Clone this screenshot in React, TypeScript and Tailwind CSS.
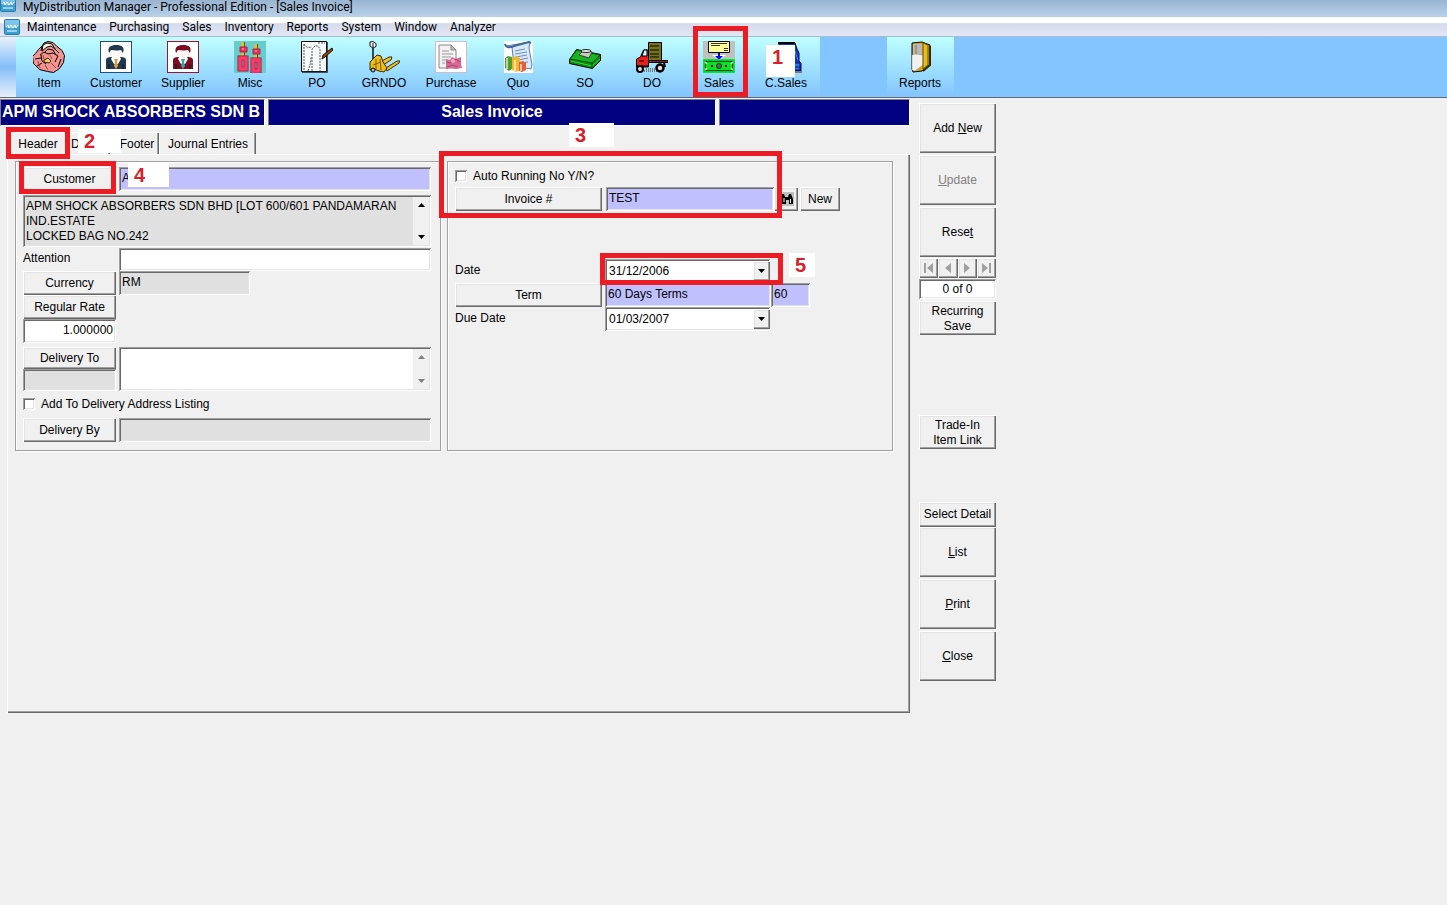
import type { ReactNode } from 'react';
import clsx from 'clsx';

const RAISED =
  'bg-[#f0f0f0] shadow-[inset_1px_1px_0_#ffffff,inset_-1px_-1px_0_#696969,inset_-2px_-2px_0_#a0a0a0,inset_2px_2px_0_#e3e3e3]';
const SUNKEN =
  'shadow-[inset_1px_1px_0_#a0a0a0,inset_-1px_-1px_0_#ffffff,inset_2px_2px_0_#696969,inset_-2px_-2px_0_#e3e3e3]';

const menuItems = ['Maintenance', 'Purchasing', 'Sales', 'Inventory', 'Reports', 'System', 'Window', 'Analyzer'];

function ItemIcon() {
  return (
    <svg viewBox="0 0 32 32" className="h-8 w-8">
      <path d="M9 5l2-3 4-1.500 5 1 4 4 5 4 2.500 5-1 7-4 6-6 4-6-1-8-2-6-6-1-7 3-3 3-4z" fill="#f29490" stroke="#000" />
      <path d="M10 4l4-2 5 1 3 5-4-3-4 1-5 4z" fill="#fffbe0" stroke="#000" />
      <path d="M9 5l-1 5M12 11l3-3 5 1 3 5M22 8l4 4M7 14l4-3 4 2 5-1 5 3" fill="none" stroke="#000" />
      <path d="M2 18l6-1M8 14l1 6 4 3M4 25l5-3M25 15l-3 6M28 18l-3 8" fill="none" stroke="#000" />
      <path d="M11 19l4-2 3 3-2 2-5-1z" fill="#f5d04a" stroke="#000" strokeWidth=".8" />
      <path d="M12 24l3 5M18 22l5 5M10 14l1 4M17 14l2 4M5 20l2 7" fill="none" stroke="#b04040" />
    </svg>
  );
}

function PersonIcon({ frame, suit, tie }: { frame: string; suit: string; tie: string }) {
  return (
    <svg viewBox="0 0 32 32" className="h-8 w-8">
      <rect x=".5" y=".5" width="31" height="31" fill="#fff" stroke={frame} />
      <path d="M10 9h12v4c0 3-3 5-6 5s-6-2-6-5z" fill="#fdf8f5" stroke="#e0d8d4" strokeWidth=".5" />
      <path d="M9 12C7 6 11 4 16 4c6 0 9 2 7 8l-2-3c-4 1-7 0-10 0z" fill={suit} />
      <path d="M6 28v-9c0-2 2-3 5-3h10c3 0 5 1 5 3v9z" fill={suit} />
      <path d="M12 16h8l1 2-3 5h-4l-3-5z" fill="#fff" />
      <path d="M14 18h4l-1 3 1 4-2 3-2-3 1-4z" fill={tie} />
      <path d="M9 23v5M23 23v5" stroke="#0b1420" />
    </svg>
  );
}

function MiscIcon() {
  return (
    <svg viewBox="0 0 32 32" className="h-8 w-8">
      <rect width="32" height="32" fill="#66cccc" />
      {[0, 13].map((x) => (
        <g key={x} transform={`translate(${x} ${x ? 2 : 0})`}>
          <path d="M9 1v5M9 10v5" stroke="#e8c020" strokeWidth="3" />
          <path d="M10.500 1v5M10.500 11v4" stroke="#7a4c10" />
          <path d="M6 6h7v5H6z" fill="#f03060" stroke="#a82048" />
          <path d="M6 17h6v11H6z" fill="none" stroke="#8c1838" strokeWidth="5" />
          <path d="M6 17h6v11H6z" fill="none" stroke="#ff3868" strokeWidth="3.500" />
          <path d="M8 8h2" stroke="#ffb0c0" />
        </g>
      ))}
    </svg>
  );
}

function PoIcon() {
  return (
    <svg viewBox="0 0 32 32" className="h-8 w-8">
      <path d="M.5.500h25v30H.500z" fill="#f6fafa" stroke="#000" />
      <path d="M26 1v30H1" fill="none" stroke="#222" strokeWidth="1.500" />
      <path
        d="M3 3c1 3 4 4 8 3M11 30V8l3-3h3l2 3v22M7 30c2-6 3-9 3-14M3 3v27M17 2h7"
        fill="none"
        stroke="#555"
        strokeDasharray="2 1"
      />
      <path d="M21 18l1-4 9-7 1 2-8 7z" fill="#8b4513" stroke="#2c1205" />
    </svg>
  );
}

function GrnIcon() {
  return (
    <svg viewBox="0 0 32 32" className="h-8 w-8">
      <path d="M5 5v20" stroke="#111" strokeWidth="1.500" />
      <path d="M2 1l3-.5 3 2v3L5 7 2 5zM5 2v4" fill="#fff" stroke="#111" />
      <path d="M14 20l7-4h3l-1 3-8 5zM18 27l11-7h3l-1 2-12 8z" fill="#f0c020" stroke="#3a2a00" />
      <path d="M2 21l4-4 3-3 4 1 2 6 4 6-3 4-5-1-5-2-4 1z" fill="#eebc1c" stroke="#3a2a00" />
      <path d="M8 18v10M12 18l1 11M5 24l8-3" fill="none" stroke="#7c5c00" />
      <circle cx="5" cy="29" r="2" fill="#bbb" stroke="#000" />
    </svg>
  );
}

function PurchaseIcon() {
  return (
    <svg viewBox="0 0 32 32" className="h-8 w-8">
      <rect x=".5" y=".5" width="31" height="31" fill="#fff" stroke="#d8b8cc" />
      <path d="M4 4h12l5 5v18H4z" fill="#f2f2f2" stroke="#888" />
      <path d="M16 4v5h5z" fill="#bbb" stroke="#888" />
      <path d="M7 10h7M7 13h11M7 16h9M7 19h4M7 22h3" stroke="#999" />
      <path d="M11 18l4 1 2-3 4 2 5-2v6l1 5-6 1-5-1-5 1z" fill="#d76a96" />
      <path d="M11 21l5 1 5-4 4 3M12 26l5-2 6 2" fill="none" stroke="#a8406c" />
      <circle cx="18" cy="20" r="2" fill="#f2a9c4" />
    </svg>
  );
}

function QuoIcon() {
  return (
    <svg viewBox="0 0 32 32" className="h-8 w-8">
      <path d="M2 0h29v32H2z" fill="#fff" />
      <path d="M5 5l5 1 2 19 17 3 1-4-3-17 1-6-18 3z" fill="#d8e8fa" stroke="#5b7fae" />
      <path d="M3 3c1 4 5 4 9 2l15-4 2 1" fill="none" stroke="#41689d" strokeWidth="2" />
      <path d="M13 10l10-2M13 13l12-2M14 16l11-2M16 19l10-2M18 22l8-1" stroke="#6d8db8" />
      <path d="M3 17l3-2 4 1v12l-3 2-4-3z" fill="#4f9d2f" />
      <path d="M10 17l4-2 4 2v12l-4 2-4-2z" fill="#f0b62c" />
      <path d="M17 21l4-1 3 2v7l-4 2-3-1z" fill="#e4602e" />
      <path d="M5 17v11M13 19v11M19 23v7" stroke="#fff" opacity=".6" strokeWidth="2" />
    </svg>
  );
}

function SoIcon() {
  return (
    <svg viewBox="0 0 32 32" className="h-8 w-8">
      <path d="M.500 18.500l7-10 24 5v6l-8 8-23-5z" fill="#0a8c14" stroke="#000" />
      <path d="M1 18l7-9 23 5-8 8z" fill="#18b424" stroke="#04500a" />
      <path d="M2 20l21 5 8-7" fill="none" stroke="#25e030" />
      <path d="M10 14l5-5 8 2-3 6z" fill="#c4cdc0" stroke="#30402c" />
      <ellipse cx="17" cy="10" rx="5" ry="1.500" fill="#eee" stroke="#222" />
      <path d="M23 22v5" stroke="#04500a" />
    </svg>
  );
}

function DoIcon() {
  return (
    <svg viewBox="0 0 32 32" className="h-8 w-8">
      <path d="M8 30h14M10 28h12" stroke="#777" strokeWidth="2" strokeDasharray="1 1" />
      <path d="M12.500 1.500h13v18h-13z" fill="#77711c" stroke="#000" />
      <path d="M14 5h9M14 9h9M14 13h9M14 16h9" stroke="#2c2a05" strokeWidth="1.500" />
      <path d="M12 19.500h20v2H12z" fill="#a01818" stroke="#000" />
      <path d="M.500 26v-8l4-2 3-7h5v17z" fill="#ee1c1c" stroke="#000" />
      <path d="M6 15l2-6h3v6z" fill="#bff" stroke="#000" />
      <path d="M0 25h13M3 20h5" stroke="#000" />
      <circle cx="4" cy="28" r="3" fill="#ddd" stroke="#000" strokeWidth="2" />
      <circle cx="24" cy="27" r="3.500" fill="#ddd" stroke="#000" strokeWidth="2.500" />
      <path d="M28 22l1 4" stroke="#000" strokeWidth="2" />
    </svg>
  );
}

function SalesIcon() {
  return (
    <svg viewBox="0 0 32 32" className="h-8 w-8">
      <rect width="32" height="32" fill="#c0c0c0" />
      <path d="M5.500.500h21v11h-21z" fill="#ffff99" stroke="#000" />
      <path d="M8 2.500h16M8 4.500h9M21 7.500h4M21 9.500h4" stroke="#333" />
      <path d="M9 14h14l-7 5z" fill="#fff" />
      <path d="M15 12h2v3h3l-4 4-4-4h3z" fill="#00f" />
      <path d="M.5 18.500h31v13H.500z" fill="#00d818" stroke="#00e838" />
      <path d="M2.500 20.500h27v9h-27z" fill="#10e020" stroke="#004c08" />
      <path d="M2 21l2 2M30 21l-2 2M2 29l2-2M30 29l-2-2" stroke="#fff" strokeWidth="1.500" />
      <circle cx="16" cy="25" r="2.500" fill="#567056" stroke="#033" />
      <path d="M8 25h2M22 25h2" stroke="#000" strokeWidth="2" />
    </svg>
  );
}

function CashSalesIcon() {
  return (
    <svg viewBox="0 0 32 32" className="h-8 w-8">
      <path d="M9 2h16l2 6 2 4v8l2 2v8H6l3-10z" fill="#1238b8" stroke="#000060" />
      <path d="M8 2h17" stroke="#000" strokeWidth="2" />
      <path d="M25 10l3 9" stroke="#4f80ff" />
      <path d="M23 22h7v7h-7z" fill="#2878e8" stroke="#001080" />
      <path d="M24 26h6" stroke="#001080" />
      <path d="M6 31h26" stroke="#777" strokeWidth="2" />
    </svg>
  );
}

function ReportsIcon() {
  return (
    <svg viewBox="0 0 32 32" className="h-8 w-8">
      <path d="M8 2l10-1 8 3v20l-8 6-9 1-1-3z" fill="#d4a817" stroke="#000" />
      <path d="M9 3h9v11l-9-1z" fill="#b8b8b8" />
      <path d="M8 14l3-1 8 1v10l-8 6-3-1z" fill="#f2f2f2" stroke="#888" strokeWidth=".5" />
      <path d="M19 2l5 2v20l-5 4z" fill="#e4bc20" stroke="#6e5200" />
      <path d="M26 5v19l-7 6" fill="none" stroke="#3a2a00" strokeWidth="2" />
      <path d="M12 4v9" stroke="#8a7a3a" />
    </svg>
  );
}

function AppIcon({ className }: { className: string }) {
  return (
    <svg viewBox="0 0 16 16" preserveAspectRatio="xMidYMax slice" className={clsx('w-4 shrink-0', className)}>
      <rect x=".5" y=".5" width="15" height="15" rx="1" fill="#3aa0d4" stroke="#2a7cac" />
      <path d="M1 1h14v6c-5 3-9 3-14 1z" fill="#7cc4ea" />
      <path d="M2 8l2-2 1 3 2-3 2 3 2-3 1 3 2-3M3 12h10" fill="none" stroke="#fff" />
    </svg>
  );
}

const tools: { label: string; icon: ReactNode }[] = [
  { label: 'Item', icon: <ItemIcon /> },
  { label: 'Customer', icon: <PersonIcon frame="#1f4f80" suit="#21384f" tie="#e0a040" /> },
  { label: 'Supplier', icon: <PersonIcon frame="#a01030" suit="#7c0c22" tie="#20b0a8" /> },
  { label: 'Misc', icon: <MiscIcon /> },
  { label: 'PO', icon: <PoIcon /> },
  { label: 'GRNDO', icon: <GrnIcon /> },
  { label: 'Purchase', icon: <PurchaseIcon /> },
  { label: 'Quo', icon: <QuoIcon /> },
  { label: 'SO', icon: <SoIcon /> },
  { label: 'DO', icon: <DoIcon /> },
  { label: 'Sales', icon: <SalesIcon /> },
  { label: 'C.Sales', icon: <CashSalesIcon /> },
];

function ToolButton({ label, icon, children }: { label: string; icon: ReactNode; children?: ReactNode }) {
  return (
    <div className="relative w-[67px] shrink-0">
      <button className="flex h-[60px] w-full flex-col items-center bg-linear-to-b from-[#bfffff] to-[#83c3ff] pt-1 pr-px">
        {icon}
        <span className="mt-0.5 text-[12px] leading-4">{label}</span>
      </button>
      {children}
    </div>
  );
}

// Red outline around a step of the guide
function Outline({ className }: { className: string }) {
  return <div className={clsx('pointer-events-none absolute z-10 border-[5px] border-[#ed1c24]', className)} />;
}

// White tag with the step number
function Step({ n, className }: { n: number; className: string }) {
  return (
    <div className={clsx('pointer-events-none absolute z-20 bg-white pl-1.5 text-[20px] leading-6 font-bold text-[#d9202a]', className)}>
      {n}
    </div>
  );
}

function Btn({ children, className, disabled }: { children: ReactNode; className?: string; disabled?: boolean }) {
  return (
    <button disabled={disabled} className={clsx(RAISED, 'shrink-0 text-center disabled:text-[#808080]', className)}>
      {children}
    </button>
  );
}

function Field({ label, value, className }: { label: string; value?: string; className?: string }) {
  return (
    <input aria-label={label} defaultValue={value} className={clsx(SUNKEN, 'min-w-0 px-[3px] pb-0.5 outline-none', className)} />
  );
}

function DateSelect({ id, value }: { id: string; value: string }) {
  return (
    <div className="relative w-[165px]">
      <select id={id} className={clsx(SUNKEN, 'h-6 w-full appearance-none bg-white px-1 outline-none')}>
        <option>{value}</option>
      </select>
      <span className={clsx(RAISED, 'pointer-events-none absolute top-0.5 right-0 flex h-5 w-[17px] items-center justify-center')}>
        <Triangle />
      </span>
    </div>
  );
}

function Triangle({ up }: { up?: boolean }) {
  return (
    <svg viewBox="0 0 7 4" className="h-1 w-[7px]" fill="currentColor">
      <path d={up ? 'M0 4h7L3.500 0z' : 'M0 0h7L3.500 4z'} />
    </svg>
  );
}

function ScrollBar({ className }: { className?: string }) {
  return (
    <div className={clsx('m-0.5 ml-0 flex w-4 flex-col items-center justify-between bg-[#f0f0f0] py-1.5', className)}>
      <Triangle up />
      <Triangle />
    </div>
  );
}

function NavButton({ label, d }: { label: string; d: string }) {
  return (
    <button aria-label={label} className={clsx(RAISED, 'flex flex-1 items-center justify-center text-[#a0a0a0]')}>
      <svg viewBox="0 0 12 12" className="h-3 w-3" fill="currentColor">
        <path d={d} />
      </svg>
    </button>
  );
}

function CustomerGroup() {
  return (
    <section className="flex h-[290px] flex-col border border-[#a0a0a0] pt-[5px] pr-[9px] pl-[7px] shadow-[1px_1px_0_#fff,inset_1px_1px_0_#fff]">
      <div className="relative flex gap-[3px]">
        <Btn className="h-6 w-[93px]">Customer</Btn>
        <Field label="Customer code" value="A" className="h-6 flex-1 bg-[#c0c0ff]" />
        <Outline className="-top-1.5 -left-1 h-[33px] w-[97px]" />
        <Step n={4} className="-top-1 left-[105px] w-[41px]" />
      </div>
      <div className={clsx(SUNKEN, 'mt-1 flex h-[52px] bg-[#e0e0e0]')}>
        <textarea
          aria-label="Customer address"
          readOnly
          className="min-w-0 flex-1 resize-none overflow-hidden pt-1 pl-[3px] leading-[15px] outline-none"
          defaultValue={'APM SHOCK ABSORBERS SDN BHD [LOT 600/601 PANDAMARAN\nIND.ESTATE\nLOCKED BAG NO.242'}
        />
        <ScrollBar />
      </div>
      <div className="mt-px flex gap-[3px]">
        <label htmlFor="attention" className="w-[93px] leading-5">
          Attention
        </label>
        <input id="attention" className={clsx(SUNKEN, 'h-[23px] min-w-0 flex-1 bg-white px-[3px] outline-none')} />
      </div>
      <div className="flex gap-[3px]">
        <Btn className="h-6 w-[93px]">Currency</Btn>
        <Field label="Currency code" value="RM" className="h-6 w-[131px] bg-[#e0e0e0]" />
      </div>
      <Btn className="h-6 w-[93px]">Regular Rate</Btn>
      <Field label="Rate" value="1.000000" className="h-6 w-[93px] bg-white text-right" />
      <div className="mt-1 flex gap-[3px]">
        <div className="flex w-[93px] flex-col">
          <Btn className="h-[22px]">Delivery To</Btn>
          <Field label="Delivery code" className="h-[22px] bg-[#e0e0e0]" />
        </div>
        <div className={clsx(SUNKEN, 'flex h-11 flex-1 bg-white')}>
          <textarea aria-label="Delivery address" className="min-w-0 flex-1 resize-none px-[3px] outline-none" />
          <ScrollBar className="text-[#808080]" />
        </div>
      </div>
      <label className="mt-[3px] flex h-5 items-center gap-1.5">
        <input type="checkbox" className={clsx(SUNKEN, 'h-3 w-3 appearance-none bg-white')} />
        Add To Delivery Address Listing
      </label>
      <div className="mt-1 flex gap-[3px]">
        <Btn className="h-6 w-[93px]">Delivery By</Btn>
        <Field label="Delivered by" className="h-6 flex-1 bg-[#e0e0e0]" />
      </div>
    </section>
  );
}

function InvoiceGroup() {
  return (
    <section className="relative h-[290px] border border-[#a0a0a0] px-[7px] pt-1 shadow-[1px_1px_0_#fff,inset_1px_1px_0_#fff]">
      <Outline className="-top-[11px] -left-[9px] h-[67px] w-[343px]" />
      <Step n={3} className="-top-[39px] left-[121px] w-[45px]" />
      <label className="flex h-5 items-center gap-1.5">
        <input type="checkbox" className={clsx(SUNKEN, 'h-3 w-3 appearance-none bg-white')} />
        Auto Running No Y/N?
      </label>
      <div className="mt-px flex">
        <Btn className="h-6 w-[147px]">Invoice #</Btn>
        <Field label="Invoice number" value="TEST" className="ml-1 h-6 w-[168px] bg-[#c0c0ff]" />
        <button aria-label="Find invoice" className={clsx(RAISED, 'flex h-6 w-6 items-center justify-center')}>
          <svg viewBox="0 0 16 14" className="h-3.5 w-4">
            <rect width="16" height="14" fill="#c0c0c0" />
            <path d="M4 2h2l1 3h3l1-3h2l2 5v5h-4V8H8v4H4z" fill="#000" />
            <path d="M6 6v4M12.500 7v4" stroke="#fff" />
          </svg>
        </button>
        <Btn className="ml-0.5 h-6 w-10">New</Btn>
      </div>
      <div className="mt-12 grid grid-cols-[150px_1fr]">
        <label htmlFor="date" className="leading-[22px]">
          Date
        </label>
        <div className="relative">
          <DateSelect id="date" value="31/12/2006" />
          <Outline className="-top-1.5 -left-[5px] h-8 w-[183px]" />
          <Step n={5} className="-top-1.5 left-[184px] w-[26px]" />
        </div>
        <Btn className="h-6 w-[147px]">Term</Btn>
        <div className="flex">
          <Field label="Term name" value="60 Days Terms" className="h-6 w-[166px] bg-[#c0c0ff]" />
          <Field label="Term days" value="60" className="h-6 w-[39px] bg-[#c0c0ff]" />
        </div>
        <label htmlFor="due-date" className="leading-[22px]">
          Due Date
        </label>
        <DateSelect id="due-date" value="01/03/2007" />
      </div>
    </section>
  );
}

function SideButtons() {
  return (
    <aside className="ml-[9px] flex w-[77px] shrink-0 flex-col pt-[5px]">
      <div className="flex flex-col gap-0.5">
        <Btn className="h-[50px]">
          Add <u>N</u>ew
        </Btn>
        <Btn className="h-[50px]" disabled>
          <u>U</u>pdate
        </Btn>
        <Btn className="h-[50px]">
          Rese<u>t</u>
        </Btn>
      </div>
      <div className="mt-px flex h-5">
        <NavButton label="First" d="M1 1h2v10H1zM10 1v10L4 6z" />
        <NavButton label="Previous" d="M9 1v10L3 6z" />
        <NavButton label="Next" d="M3 1v10l6-5z" />
        <NavButton label="Last" d="M9 1h2v10H9zM2 1v10l6-5z" />
      </div>
      <input
        aria-label="Record position"
        defaultValue="0 of 0"
        className={clsx(SUNKEN, 'mt-px h-5 min-w-0 bg-white px-[3px] text-center outline-none')}
      />
      <Btn className="mt-0.5 h-[34px] pt-0.5 leading-[15px]">
        Recurring
        <br />
        Save
      </Btn>
      <Btn className="mt-20 h-[34px] pt-0.5 leading-[15px]">
        Trade-In
        <br />
        Item Link
      </Btn>
      <Btn className="mt-[53px] h-[25px] pb-0.5 whitespace-nowrap">Select Detail</Btn>
      <div className="flex flex-col gap-0.5">
        <Btn className="h-[50px]">
          <u>L</u>ist
        </Btn>
        <Btn className="h-[50px]">
          <u>P</u>rint
        </Btn>
        <Btn className="h-[50px]">
          <u>C</u>lose
        </Btn>
      </div>
    </aside>
  );
}

const TAB = 'border-t border-l border-white shadow-[inset_-1px_0_0_#696969,inset_-2px_0_0_#a0a0a0]';
const CAPTION = 'border border-t-[#808080] border-r-white border-b-white border-l-[#808080] bg-[#000080]';

export default function App() {
  return (
    <div className="min-h-screen bg-[#f0f0f0] font-['Liberation_Sans',sans-serif] text-[12px] text-black">
      <header className="flex h-[17px] items-start gap-[7px] bg-linear-to-b from-[#99b4d1] to-[#b9d1ea] font-['Roboto',sans-serif]">
        <AppIcon className="h-3" />
        <h1 className="leading-[14px]">MyDistribution Manager - Professional Edition - [Sales Invoice]</h1>
      </header>
      <nav className="flex h-5 items-center gap-[13px] border-b border-[#a9bccb] bg-linear-to-b from-white from-30% via-[#d5dbec] via-35% to-[#e3e6f5] pl-1 font-['Roboto',sans-serif]">
        <AppIcon className="h-4" />
        {menuItems.map((item) => (
          <a key={item} href="#" className="first-of-type:-ml-1.5">
            {item}
          </a>
        ))}
      </nav>

      <div className="flex h-[61px] border-b border-[#606870] bg-[#83c5ff]">
        <div className="w-4 shrink-0 bg-linear-to-b from-[#e8f0f8] via-[#83bdf8] to-[#e8f0f8]" />
        {tools.map((tool) => (
          <ToolButton key={tool.label} {...tool}>
            {tool.label === 'Sales' && <Outline className="-top-[11px] left-[7px] h-[71px] w-[55px]" />}
            {tool.label === 'C.Sales' && <Step n={1} className="top-2 left-[13px] h-8 w-[29px]" />}
          </ToolButton>
        ))}
        <div className="w-[67px]" />
        <ToolButton label="Reports" icon={<ReportsIcon />} />
      </div>

      <main className="flex">
        <div className="max-w-[910px] flex-1">
          <div className="grid h-7 grid-cols-[265fr_448fr_191fr] gap-[3px] pt-px text-[16px] leading-6 font-bold text-white">
            <div className={clsx(CAPTION, 'overflow-hidden pl-px whitespace-nowrap')}>APM SHOCK ABSORBERS SDN B</div>
            <h2 className={clsx(CAPTION, 'text-center')}>Sales Invoice</h2>
            <div className={CAPTION} />
          </div>

          <div className="relative mt-1.5 flex h-[22px] pl-2">
            <button className={clsx(TAB, 'w-[61px] pr-0.5')}>Header</button>
            <button aria-label="Detail" className={clsx(TAB, 'w-[41px] pl-px text-left')}>
              D
            </button>
            <button className={clsx(TAB, 'w-[49px] pl-1')}>Footer</button>
            <button className={clsx(TAB, 'w-[97px]')}>Journal Entries</button>
            <Outline className="-top-[5px] left-1.5 h-8 w-16" />
            <Step n={2} className="-top-[3px] left-[78px] w-[43px]" />
          </div>
          <div className="ml-[7px] min-h-[559px] border-t border-l border-white pt-1.5 pr-[17px] pl-[7px] shadow-[inset_-1px_-1px_0_#696969,inset_-2px_-2px_0_#a0a0a0]">
            <div className="grid grid-cols-[426fr_446fr] gap-1.5">
              <CustomerGroup />
              <InvoiceGroup />
            </div>
          </div>
        </div>
        <SideButtons />
      </main>
    </div>
  );
}
